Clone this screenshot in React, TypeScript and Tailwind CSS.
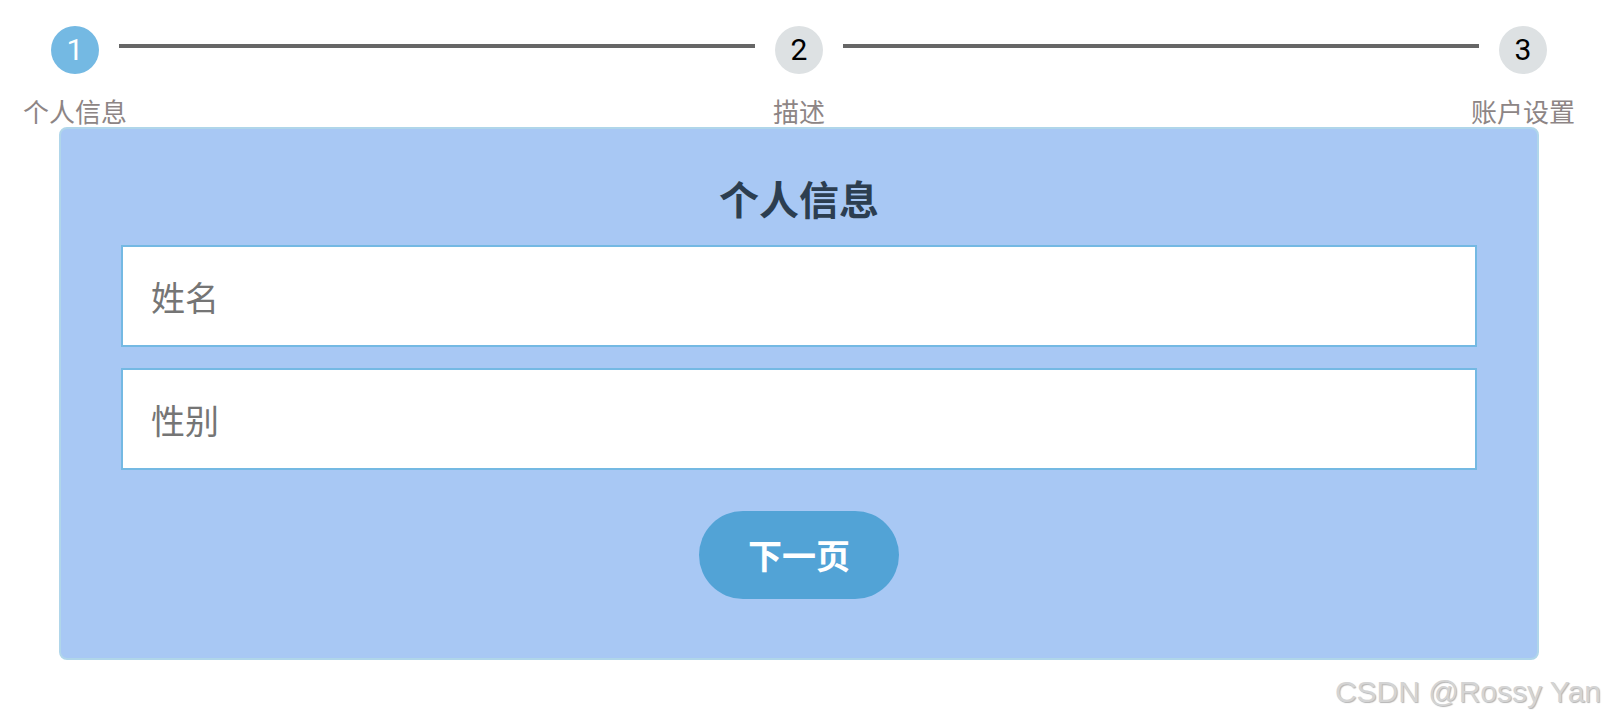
import React from 'react'

const steps = [
  { num: '1', label: '个人信息', active: true },
  { num: '2', label: '描述', active: false },
  { num: '3', label: '账户设置', active: false },
]

const cjk = { fontFamily: '"Noto Sans CJK SC", "Noto Sans", sans-serif' }

const Step: React.FC<{ num: string; label: string; active: boolean }> = ({ num, label, active }) => (
  <div className="flex flex-col items-center w-12 shrink-0">
    <div
      className={`w-12 h-12 rounded-full flex items-center justify-center text-[30px] leading-none ${
        active ? 'bg-[#74b9e3] text-white' : 'bg-[#dde1e3] text-black'
      }`}
      style={{ fontFamily: 'Roboto, "Liberation Sans", sans-serif' }}
    >
      {num}
    </div>
    <div className="mt-6 whitespace-nowrap text-[26px] leading-none text-[#8d8585]" style={cjk}>
      {label}
    </div>
  </div>
)

const App: React.FC = () => {
  return (
    <div className="w-[1606px] h-[718px] bg-white overflow-hidden" style={cjk}>
      {/* Stepper */}
      <div className="flex items-start pt-[26px] pl-[51px] pr-[59px]">
        <Step {...steps[0]} />
        <div className="flex-1 h-1 mt-[18px] mx-5 bg-[#666666]" />
        <Step {...steps[1]} />
        <div className="flex-1 h-1 mt-[18px] mx-5 bg-[#666666]" />
        <Step {...steps[2]} />
      </div>

      {/* Card */}
      <div className="ml-[59px] mr-[67px] mt-[3px] h-[533px] rounded-lg border-2 border-[#b0d6ea] bg-[#a8c8f4] px-[60px] pt-[49px] flex flex-col">
        <h2 className="text-center text-[40px] leading-none font-bold text-[#2c3e50]">个人信息</h2>
        <input
          className="mt-[27px] h-[102px] w-full border-2 border-[#74b9e3] bg-white px-7 text-[34px] text-[#555] placeholder:text-[#757575] outline-none"
          placeholder="姓名"
          style={cjk}
        />
        <input
          className="mt-[21px] h-[102px] w-full border-2 border-[#74b9e3] bg-white px-7 text-[34px] text-[#555] placeholder:text-[#757575] outline-none"
          placeholder="性别"
          style={cjk}
        />
        <div className="flex justify-center mt-[41px]">
          <button
            className="w-[200px] h-[88px] rounded-full bg-[#52a3d6] text-white text-[34px] font-bold leading-none"
            style={cjk}
          >
            下一页
          </button>
        </div>
      </div>

      {/* Watermark */}
      <div
        className="mt-[17px] pr-[5px] text-right text-[30px] leading-none text-[#d4d4d4]"
        style={{ fontFamily: '"Liberation Sans", Arial, sans-serif', textShadow: '1px 1px 1px #b4b4b4' }}
      >
        CSDN @Rossy Yan
      </div>
    </div>
  )
}

export default App
